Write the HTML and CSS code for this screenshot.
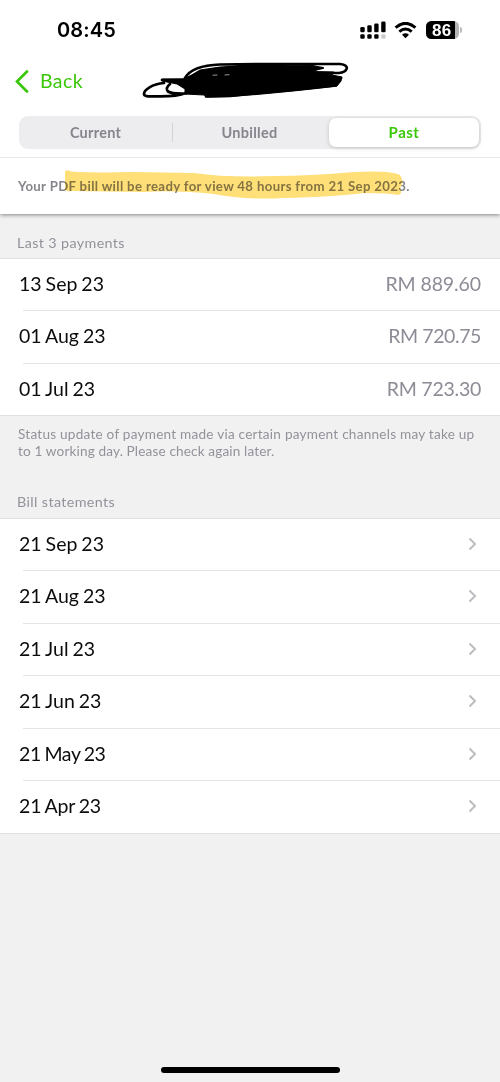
FILE: index.html
```html
<!DOCTYPE html>
<html lang="en">
<head>
<meta charset="utf-8">
<meta name="viewport" content="width=device-width, initial-scale=1">
<title>Past bills</title>
<link rel="stylesheet" href="styles.css">
</head>
<body>
<div class="screen">
  <header class="top">
    <div class="status">
      <span class="time">08:45</span>
      <div class="indicators">
        <svg class="signal" width="27" height="19" viewBox="0 0 27 19">
          <rect x="0.3" y="6" width="4.4" height="5.2" rx="1.3"/>
          <rect x="7.3" y="4.2" width="4.4" height="7" rx="1.3"/>
          <rect x="14.2" y="2.5" width="4.4" height="8.7" rx="1.3"/>
          <rect x="21.2" y="0.6" width="4.4" height="10.6" rx="1.3"/>
          <rect x="0.3" y="13.3" width="4.4" height="4.5" rx="1.3"/>
          <rect x="7.3" y="13.3" width="4.4" height="4.5" rx="1.3"/>
          <rect x="14.2" y="13.3" width="4.4" height="4.5" rx="1.3"/>
          <rect class="off" x="21.2" y="13.3" width="4.4" height="4.5" rx="1.3"/>
        </svg>
        <svg class="wifi" width="23" height="17" viewBox="0 0 23 17">
          <path d="M1.6 5.7Q11.5 -3 21.4 5.7" stroke-width="3"/>
          <path d="M5.3 9.6Q11.5 4.4 17.7 9.6" stroke-width="3"/>
          <path class="dot" d="M8 12.7Q11.5 10 15 12.7L11.5 16.2Z"/>
        </svg>
        <span class="battery"><span class="level">86</span></span>
        <span class="cap"></span>
      </div>
    </div>
    <nav class="nav">
      <a class="back">
        <svg width="14" height="23" viewBox="0 0 14 23"><path d="M12 1.5L2 11.5L12 21.5"/></svg>
        <span>Back</span>
      </a>
      <svg class="scribble" width="210" height="40" viewBox="0 0 210 40">
        <path class="mass" d="M22 18L44 18L50 15L60 9L80 6L100 5L140 4L173 4.5L184 7L172 10.5L194 11L192 14L202 16L201 20L197 25L150 30L90 35.5L67 36L64 34L45 33L45 28L37 23L22 20Z"/>
        <path d="M22 19L60 18.5M45 17Q52 4.500 80 3.500L140 3L200 3Q208 4 206.500 8Q205 11.500 199 12L180 12M48 17Q62 9 90 6.500L140 4M24 22C12 23 4 29 4 33Q4 36 14 35.300Q36 36 46 32M30 23Q25 27 28 30.500Q32 33 46 32.500M66 35.500L90 35Q150 30 196 24.500M172 7L182 7M180 17L201 17M180 21L199 20.500"/>
        <path class="gap" d="M31 28.500L42 29.500L42 30.500L36 30.300ZM73 14.200L77 14M85 14L89 13.700"/>
      </svg>
    </nav>
    <div class="tabs">
      <div class="tab">Current</div>
      <div class="tab divided">Unbilled</div>
      <div class="tab active">Past</div>
    </div>
    <div class="notice">
      <span class="notice-text">Your PDF bill will be ready for view 48 hours from 21 Sep 2023.</span>
      <svg class="marker" width="340" height="32" viewBox="0 0 340 32"><path d="M1 2Q2 -1 7 1.5Q30 3 70 2L130 3Q165 8 210 6Q245 6 290 2Q327 0 336 5Q341 12 336 18Q339 24 334 25Q325 23 300 23Q270 27 220 28Q180 30 150 24Q110 20 80 22L8 21Q0 22 1 18Z"/></svg>
    </div>
  </header>

  <main>
    <h2 class="heading">Last 3 payments</h2>
    <ul class="list">
      <li class="row"><span class="date">13 Sep 23</span><span class="amount">RM 889.60</span></li>
      <li class="row"><span class="date">01 Aug 23</span><span class="amount tighter">RM 720.75</span></li>
      <li class="row"><span class="date">01 Jul 23</span><span class="amount tight">RM 723.30</span></li>
    </ul>
    <p class="note">Status update of payment made via certain payment channels may take up<br><span class="note-end">to 1 working day. Please check again later.</span></p>
    <h2 class="heading bills">Bill statements</h2>
    <ul class="list">
      <li class="row"><span class="date">21 Sep 23</span><svg class="chevron" width="9" height="14" viewBox="0 0 9 14"><path d="M1.5 1.5L7 7L1.5 12.5"/></svg></li>
      <li class="row"><span class="date">21 Aug 23</span><svg class="chevron" width="9" height="14" viewBox="0 0 9 14"><path d="M1.5 1.5L7 7L1.5 12.5"/></svg></li>
      <li class="row"><span class="date">21 Jul 23</span><svg class="chevron" width="9" height="14" viewBox="0 0 9 14"><path d="M1.5 1.5L7 7L1.5 12.5"/></svg></li>
      <li class="row"><span class="date">21 Jun 23</span><svg class="chevron" width="9" height="14" viewBox="0 0 9 14"><path d="M1.5 1.5L7 7L1.5 12.5"/></svg></li>
      <li class="row"><span class="date tighter">21 May 23</span><svg class="chevron" width="9" height="14" viewBox="0 0 9 14"><path d="M1.5 1.5L7 7L1.5 12.5"/></svg></li>
      <li class="row"><span class="date snug">21 Apr 23</span><svg class="chevron" width="9" height="14" viewBox="0 0 9 14"><path d="M1.5 1.5L7 7L1.5 12.5"/></svg></li>
    </ul>
  </main>
  <div class="home"></div>
</div>
</body>
</html>
```
FILE: styles.css
```css
* { box-sizing: border-box; }
body { margin: 0; font-family: Lato, "Open Sans", sans-serif; color: #0c0c0c; background: #f1f1f1; }
h2, p, ul { margin: 0; padding: 0; font-weight: 400; list-style: none; }
svg { display: block; flex: none; }

.screen { display: flex; flex-direction: column; width: 500px; height: 1082px; background: #f1f1f1; overflow: hidden; }
.top { height: 214px; background: #fff; box-shadow: 0 1px 4px rgba(0, 0, 0, .45); flex: none; }

.status { display: flex; justify-content: space-between; align-items: center; height: 60px; padding: 0 38px 0 57px; }
.time { font: 600 20px/24px Inter, sans-serif; letter-spacing: .15px; color: #000; }
.indicators { display: flex; align-items: center; }
.signal { fill: #000; }
.signal .off { fill: #ccc; }
.wifi { margin-left: 7px; fill: none; stroke: #000; }
.wifi .dot { fill: #000; stroke: none; }
.battery { display: flex; width: 33px; height: 18px; margin-left: 9px; border-radius: 5.5px; background: #b5b5b5; overflow: hidden; }
.level { width: 29px; padding-left: 6px; background: #000; color: #fff; font: 700 17px/19px "Liberation Sans", sans-serif; letter-spacing: .4px; }
.cap { width: 2px; height: 6px; margin-left: 1px; border-radius: 0 2px 2px 0; background: #bbb; }

.nav { display: flex; height: 56px; }
.back { display: flex; align-items: center; gap: 11px; width: 140px; height: 42px; padding-left: 15px; color: #3bc80a; font-size: 19.5px; letter-spacing: .4px; }
.back path { fill: none; stroke: #3bc80a; stroke-width: 2.7; stroke-linecap: round; }
.back span { padding-bottom: 1px; }
.scribble { margin-top: 1px; }
.scribble path { fill: none; stroke: #000; stroke-width: 2.7; stroke-linecap: round; stroke-linejoin: round; }
.scribble .mass { fill: #000; stroke-width: 1; }
.scribble .gap { fill: #fff; stroke: #fff; stroke-width: .6; }

.tabs { display: grid; grid-template-columns: 153px 157px 1fr; height: 33px; margin: 0 19px; border-radius: 9px; background: #ededef; }
.tab { display: flex; align-items: center; justify-content: center; font-size: 14.5px; font-weight: 700; letter-spacing: .25px; color: #85858e; }
.divided { padding-right: 3px; border-left: 1px solid #d2d2d6; border-image: linear-gradient(transparent 22%, #d2d2d6 22% 78%, transparent 78%) 1; }
.active { margin: 2px 2px 2px 0; padding-bottom: 1px; border-radius: 7px; background: #fff; color: #3bc80a; font-size: 15px; letter-spacing: .5px; box-shadow: 0 1px 4px rgba(0, 0, 0, .18); }

.notice { position: relative; display: flex; align-items: center; height: 57px; margin-top: 8px; padding: 0 0 1px 18px; border-top: 1px solid #e9e9eb; }
.notice-text { font-size: 13.2px; font-weight: 700; letter-spacing: .35px; color: #85858c; white-space: nowrap; }
.marker { position: absolute; left: 64px; top: 12px; mix-blend-mode: multiply; }
.marker path { fill: #ffdf78; }

.heading { height: 44px; padding: 20px 17px 0; font-size: 14.3px; line-height: 18px; letter-spacing: .38px; color: #92929b; }
.list { background: #fff; border-top: 1px solid #e0e0e1; border-bottom: 1px solid #e0e0e1; }
.row { display: flex; align-items: center; justify-content: space-between; height: 52.5px; margin-left: 23px; padding: 0 19px 1px 0; border-top: 1px solid #e4e4e6; }
.row:first-child { height: 51px; border-top: 0; }
.row:last-child { height: 52.5px; }
.date { margin-left: -4px; padding-bottom: 1px; font-size: 19.5px; word-spacing: -1px; }
.amount { padding-bottom: 1px; font-size: 19.5px; letter-spacing: -.1px; color: #8c8c96; }
.snug { letter-spacing: -.15px; }
.tight { letter-spacing: -.25px; }
.tighter { letter-spacing: -.4px; }
.chevron { margin-right: 4px; }
.chevron path { fill: none; stroke: #bdbdc1; stroke-width: 2; }

.note { height: 68px; padding: 10px 18px 0; font-size: 13.6px; line-height: 17px; letter-spacing: .23px; color: #92929b; white-space: nowrap; }
.note-end { letter-spacing: .14px; }
.bills { height: 34px; padding-top: 9px; }
.home { width: 179px; height: 6px; margin: auto auto 9px; border-radius: 3px; background: #000; }
```
